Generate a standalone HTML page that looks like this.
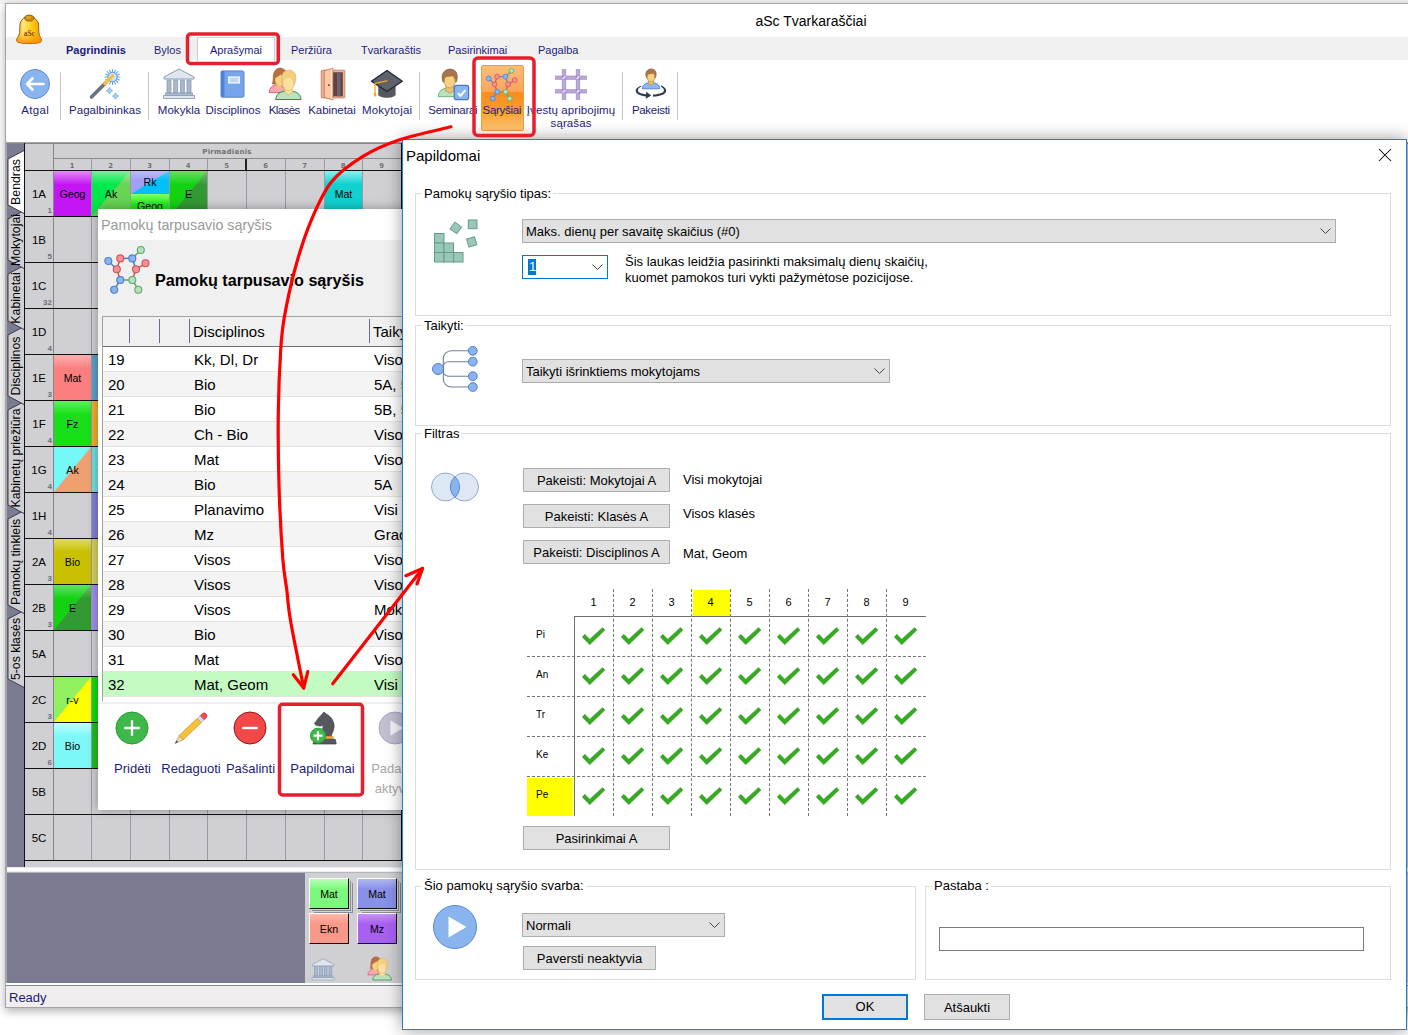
<!DOCTYPE html>
<html lang="lt"><head><meta charset="utf-8"><title>aSc Tvarkaraščiai</title>
<style>
*{box-sizing:border-box;margin:0;padding:0}
html,body{width:1408px;height:1035px;overflow:hidden;background:#fff}
body{position:relative;font-family:"Liberation Sans",sans-serif;font-size:13px;color:#000}
.a{position:absolute}
.c{position:absolute;text-align:center;white-space:nowrap}
.t{position:absolute;white-space:nowrap}
#win{position:absolute;left:5px;top:3px;width:1420px;height:1005px;background:#fff;border:1px solid #a4a4a4;box-shadow:0 3px 9px rgba(0,0,0,.32)}
.rl{position:absolute;text-align:center;white-space:nowrap;font-size:11.5px;color:#1c1c78;line-height:13px}
.tab{position:absolute;top:44px;white-space:nowrap;font-size:11px;color:#1c1c78;line-height:13px}
.sep{position:absolute;top:72px;width:1px;height:48px;background:#c6c6c6}
.cell{position:absolute;font-size:10.600px;text-align:center;white-space:nowrap;color:#000}
.rh{position:absolute;left:25px;width:28px;font-size:11.500px;text-align:center;line-height:46px;color:#000}
.rn{position:absolute;font-size:8px;font-weight:bold;color:#6e6e76;text-align:right;width:14px;line-height:8px}
  .vt{position:absolute;left:7px;width:18px;font-size:12.300px;color:#000;white-space:nowrap}
.vt span{position:absolute;left:50%;top:50%;transform:translate(-50%,-50%) rotate(-90deg);display:block}
.row{position:absolute;left:103px;width:300px;height:25px;font-size:15px;line-height:25px;border-bottom:1px solid #e4e4dc}
.row b{position:absolute;font-weight:normal;white-space:nowrap}
.gb{position:absolute;border:1px solid #dcdcdc}
.gl{position:absolute;background:#fff;white-space:nowrap;font-size:13px;line-height:15px;padding:0 2px}
.btn{position:absolute;background:#e1e1e1;border:1px solid #adadad;text-align:center;white-space:nowrap;font-size:13px}
.cb{position:absolute;background:#e1e1e1;border:1px solid #adadad;white-space:nowrap;font-size:13px;padding-left:3px}
.tl{position:absolute;text-align:center;white-space:nowrap;font-size:13px;color:#1c1c78;line-height:15px}
</style></head><body>

<div class="a" style="left:0;top:0;width:1408px;height:4px;background:#f2f2f2"></div>
<div id="win"></div>
<div class="c" style="left:711px;top:13px;width:200px;font-size:14px;line-height:16px">aSc Tvarkaraščiai</div>
<div class="a" style="left:6px;top:37px;width:1402px;height:23px;background:#f0f0f0"></div>
<div class="a" style="left:197px;top:37px;width:78px;height:24px;background:#fff;border:1px solid #d0d0d0;border-bottom:none"></div>
<div class="tab" style="left:66px;font-weight:bold;">Pagrindinis</div>
<div class="tab" style="left:154px;">Bylos</div>
<div class="tab" style="left:210px;">Aprašymai</div>
<div class="tab" style="left:291px;">Peržiūra</div>
<div class="tab" style="left:361px;">Tvarkaraštis</div>
<div class="tab" style="left:448px;">Pasirinkimai</div>
<div class="tab" style="left:538px;">Pagalba</div>
<svg class="a" style="left:15px;top:13px" width="30" height="32" viewBox="0 0 30 32">
<defs><linearGradient id="bg1" x1="0" y1="0" x2="1" y2="0"><stop offset="0" stop-color="#f7b500"/><stop offset=".28" stop-color="#fff08a"/><stop offset=".55" stop-color="#ffd81e"/><stop offset="1" stop-color="#f09a00"/></linearGradient>
<linearGradient id="bg2" x1="0" y1="0" x2="0" y2="1"><stop offset="0" stop-color="#ff9a00" stop-opacity="0"/><stop offset=".6" stop-color="#ff9a00" stop-opacity=".15"/><stop offset="1" stop-color="#ff8200" stop-opacity=".85"/></linearGradient></defs>
<path d="M14.30 3.60C12.88 3.60 11.28 3.58 10.00 4.20C8.72 4.82 7.40 6.30 6.60 7.30C5.80 8.30 5.48 9.08 5.20 10.20C4.92 11.32 5.05 12.18 4.90 14.00C4.75 15.82 4.68 19.35 4.30 21.10C3.92 22.85 3.05 23.52 2.60 24.50C2.15 25.48 1.53 26.22 1.60 27.00C1.67 27.78 1.93 28.67 3.00 29.20C4.07 29.73 6.12 29.98 8.00 30.20C9.88 30.42 12.20 30.50 14.30 30.50C16.40 30.50 18.75 30.42 20.60 30.20C22.45 29.98 24.42 29.73 25.40 29.20C26.38 28.67 26.48 27.78 26.50 27.00C26.52 26.22 25.90 25.48 25.50 24.50C25.10 23.52 24.42 22.85 24.10 21.10C23.78 19.35 23.72 15.82 23.60 14.00C23.48 12.18 23.73 11.32 23.40 10.20C23.07 9.08 22.42 8.30 21.60 7.30C20.78 6.30 19.72 4.82 18.50 4.20C17.28 3.58 15.72 3.60 14.30 3.60Z" fill="url(#bg1)" stroke="#96560a" stroke-width="1"/>
<path d="M14.30 3.60C12.88 3.60 11.28 3.58 10.00 4.20C8.72 4.82 7.40 6.30 6.60 7.30C5.80 8.30 5.48 9.08 5.20 10.20C4.92 11.32 5.05 12.18 4.90 14.00C4.75 15.82 4.68 19.35 4.30 21.10C3.92 22.85 3.05 23.52 2.60 24.50C2.15 25.48 1.53 26.22 1.60 27.00C1.67 27.78 1.93 28.67 3.00 29.20C4.07 29.73 6.12 29.98 8.00 30.20C9.88 30.42 12.20 30.50 14.30 30.50C16.40 30.50 18.75 30.42 20.60 30.20C22.45 29.98 24.42 29.73 25.40 29.20C26.38 28.67 26.48 27.78 26.50 27.00C26.52 26.22 25.90 25.48 25.50 24.50C25.10 23.52 24.42 22.85 24.10 21.10C23.78 19.35 23.72 15.82 23.60 14.00C23.48 12.18 23.73 11.32 23.40 10.20C23.07 9.08 22.42 8.30 21.60 7.30C20.78 6.30 19.72 4.82 18.50 4.20C17.28 3.58 15.72 3.60 14.30 3.60Z" fill="url(#bg2)"/>
<ellipse cx="14.200" cy="5.100" rx="4.500" ry="3" fill="#d0900c" stroke="#8a4a00" stroke-width=".8"/>
<ellipse cx="13.600" cy="4.300" rx="2.600" ry="1.200" fill="#e0a830"/>
<text x="14.300" y="23" font-family="Liberation Serif,serif" font-size="7.500" font-weight="bold" fill="#8a4a10" text-anchor="middle">aSc</text>
</svg>
<div class="sep" style="left:60px"></div>
<div class="sep" style="left:148px"></div>
<div class="sep" style="left:419px"></div>
<div class="sep" style="left:622px"></div>
<div class="sep" style="left:677px"></div>
<div class="a" style="left:481px;top:65px;width:43px;height:66px;border:1px solid #e8a040;border-radius:2px;background:linear-gradient(#fbbd7c 0,#f9a55a 40%,#f98d1e 41%,#fb9a2c 68%,#fdc670 100%)"></div>
<div class="rl" style="left:-24.82px;top:104px;width:120px;letter-spacing:0.36px">Atgal</div>
<div class="rl" style="left:45.02px;top:104px;width:120px;letter-spacing:0.03px">Pagalbininkas</div>
<div class="rl" style="left:119.02px;top:104px;width:120px;letter-spacing:0.04px">Mokykla</div>
<div class="rl" style="left:173.00px;top:104px;width:120px;letter-spacing:0.00px">Disciplinos</div>
<div class="rl" style="left:224.21px;top:104px;width:120px;letter-spacing:-0.58px">Klasės</div>
<div class="rl" style="left:271.97px;top:104px;width:120px;letter-spacing:-0.06px">Kabinetai</div>
<div class="rl" style="left:327.11px;top:104px;width:120px;letter-spacing:0.21px">Mokytojai</div>
<div class="rl" style="left:392.84px;top:104px;width:120px;letter-spacing:-0.31px">Seminarai</div>
<div class="rl" style="left:441.85px;top:104px;width:120px;letter-spacing:-0.30px">Sąryšiai</div>
<div class="rl" style="left:511.05px;top:104px;width:120px;letter-spacing:0.09px">Įvestų apribojimų<br>sąrašas</div>
<div class="rl" style="left:590.86px;top:104px;width:120px;letter-spacing:-0.29px">Pakeisti</div>
<svg class="a" style="left:19px;top:68px" width="32" height="32" viewBox="0 0 32 32"><circle cx="16" cy="16" r="14.500" fill="#8ab4ee" stroke="#5b8ad6" stroke-width="1"/><path d="M24.500 16H8.500M13.500 10.500L8 16l5.500 5.500" fill="none" stroke="#fff" stroke-width="2.600" stroke-linecap="round" stroke-linejoin="round"/></svg>
<svg class="a" style="left:88px;top:68px" width="34" height="34" viewBox="0 0 34 34">
<g stroke="#5fa0e8" stroke-width="1.100" stroke-linecap="round"><path d="M24.500 1.500v3.500M24.500 13v3.500M17 9h3.500M28.500 9h3.500M19.200 3.700l2.500 2.500M27.300 11.800l2.500 2.500M29.800 3.700l-2.500 2.500M21.700 11.800l-2.500 2.500M21.600 2.100l1.300 3.100M26.100 12.800l1.300 3.100M27.400 2.100l-1.300 3.100M22.900 12.800l-1.300 3.100M17.600 6.100l3.100 1.300M28.300 10.600l3.100 1.300M17.600 11.900l3.100-1.300M28.300 7.400l3.100-1.300"/></g>
<circle cx="24.500" cy="9" r="4.600" fill="#cfe4fb" stroke="#5fa0e8" stroke-width="1"/>
<path d="M3.500 29L17.500 15" stroke="#6a7480" stroke-width="3.600" stroke-linecap="round"/>
<path d="M17 15.500L24.500 8" stroke="#f0c24a" stroke-width="3.600" stroke-linecap="round"/>
<path d="M17 15.500L18.500 14" stroke="#f0c24a" stroke-width="3.600" stroke-linecap="butt"/>
<path d="M21.500 19.500l1.100 2.100 2.100 1.100-2.100 1.100-1.100 2.100-1.100-2.100-2.100-1.100 2.100-1.100zM27.500 25l1.100 2 2 1.100-2 1.100-1.100 2-1.100-2-2-1.100 2-1.100z" fill="#a9cdf5" stroke="#5fa0e8" stroke-width=".7"/>
</svg>
<svg class="a" style="left:162px;top:68px" width="34.0" height="32.0" viewBox="0 0 34 32">
<path d="M17 1L2 9v2h30V9z" fill="#dfe6ee" stroke="#8a9bb4" stroke-width="1"/>
<g fill="#a9b8cf" stroke="#8a9bb4" stroke-width=".8"><rect x="5" y="12" width="4" height="13"/><rect x="11.700" y="12" width="4" height="13"/><rect x="18.300" y="12" width="4" height="13"/><rect x="25" y="12" width="4" height="13"/></g>
<rect x="3.500" y="25" width="27" height="2.500" fill="#a9b8cf" stroke="#8a9bb4" stroke-width=".8"/>
<rect x="1.500" y="27.500" width="31" height="3" fill="#dfe6ee" stroke="#8a9bb4" stroke-width=".8"/>
</svg>
<svg class="a" style="left:219px;top:69.500px" width="28" height="29" viewBox="0 0 28 32" preserveAspectRatio="none">
<rect x="2" y="1" width="23" height="29" rx="1.500" fill="#76a5ea" stroke="#4f83d3" stroke-width="1"/>
<rect x="2" y="1" width="3.500" height="29" fill="#4f83d3"/>
<rect x="9" y="7" width="12" height="8" fill="#e9f0fb"/>
<path d="M11 9.800h8M11 12.200h8" stroke="#9ab5de" stroke-width="1"/>
</svg>
<svg class="a" style="left:268px;top:67px" width="34.0" height="34.0" viewBox="0 0 34 34">
<path d="M1.200 25.600c.2-5 3.400-7.600 8.200-7.600s8 2.600 8.200 7.600z" fill="#f6a8b0" stroke="#e0506a" stroke-width=".9"/>
<path d="M4.300 17C6 13 4.500 9 6 5.500C7.300 2.300 10 1 12 1.100C14.500 1.100 16.500 2.500 17.600 4L17 17.200z" fill="#b87040" stroke="#9a5a30" stroke-width=".6" stroke-linejoin="round"/>
<path d="M8.600 17.500h4.600v3.200c-1.500 1.200-3.100 1.200-4.600 0z" fill="#f0c070"/>
<ellipse cx="11.300" cy="13" rx="4.200" ry="5.800" fill="#f6d283"/>
<path d="M7 11c1.500-.5 4.500-2 6.500-4.500L15 4 9 3.500 6.500 7z" fill="#b87040"/>
<path d="M7.800 32.500C8 27 12 24 20.300 24S32.800 27 33 32.500z" fill="#b9e3bf" stroke="#2f8f40" stroke-width="1"/>
<path d="M16.800 20.500h7.600v5l-3.800 2.200-3.800-2.200z" fill="#fde0a0" stroke="#d8b060" stroke-width=".6"/>
<path d="M14.600 17.500C12.600 12 13.600 5.500 18 3.800C20.500 2.600 24 3 25.800 5.200C28 6.500 28.600 12 26.400 17.500z" fill="#f2cf80" stroke="#d8b060" stroke-width=".7" stroke-linejoin="round"/>
<ellipse cx="20.400" cy="16.300" rx="5.600" ry="7.300" fill="#fde0a0" stroke="#e0b868" stroke-width=".7"/>
<path d="M14.700 14.500C14.900 13 15.300 12.300 15.900 11.600C18.500 12 22 11 24.300 9C25.300 10.500 25.900 12.500 26.100 14.500C28 10 26.500 6.500 24.800 5.600C23 3.600 20 3.400 18.200 4.600C15 5.800 13.500 10 14.700 14.500Z" fill="#f2cf80"/>
</svg>
<svg class="a" style="left:319px;top:67px" width="28" height="34" viewBox="0 0 28 34">
<rect x="2.200" y="3.200" width="23.600" height="27.700" rx=".8" fill="#f0b090" stroke="#c07a58" stroke-width=".8"/>
<rect x="13.500" y="5.300" width="10.300" height="24" fill="#5a4448"/>
<rect x="18" y="5.300" width="3.500" height="24" fill="#74606a"/>
<path d="M5.200 3.800L13.900 1V33L5.200 30.300z" fill="#ffc8a4" stroke="#b87048" stroke-width=".8" stroke-linejoin="round"/>
<path d="M12.600 1.600V32.400" stroke="#ffe2cc" stroke-width="1.200"/>
<rect x="9" y="17.300" width="1.700" height="1.700" fill="#7a4a30"/>
</svg>
<svg class="a" style="left:370px;top:69px" width="34" height="32" viewBox="0 0 34 32">
<path d="M8.200 16.400v9.100c0 1.800 4 3.200 8.700 3.200s8.700-1.400 8.700-3.200v-9.100z" fill="#55585e"/>
<path d="M17 1.500L32.300 12.200 17 22.500 1.400 12.200z" fill="#5f6268" stroke="#1a2838" stroke-width="1.300" stroke-linejoin="round"/>
<path d="M17 11.800L5 14.300V24" fill="none" stroke="#f5a820" stroke-width="1.300" stroke-linecap="round" stroke-linejoin="round"/>
<path d="M5 22.500l1.500 3-1.500 2.700-1.500-2.700z" fill="#f5a820"/>
</svg>
<svg class="a" style="left:437px;top:68px" width="34" height="34" viewBox="0 0 34 34">
<path d="M1.300 28.700c0-6 4.500-8.700 11-8.700s11 2.700 11 8.700z" fill="#b9e3bf" stroke="#5fae72" stroke-width=".9"/><path d="M8.80 18.10h7.80v5.00l-3.90 2.00l-3.90 -2.00z" fill="#f0c070" stroke="#b88a40" stroke-width=".7"/><path d="M6.10 14.10C4.30 9.10 5.10 4.70 8.10 2.90C10.10 0.90 14.30 0.50 16.60 2.10C19.90 3.10 21.30 8.10 19.30 14.10Z" fill="#a8744c" stroke="#8a5530" stroke-width=".7" stroke-linejoin="round"/><ellipse cx="12.7" cy="13.40" rx="5.40" ry="6.50" fill="#f6d283" stroke="#c39a4a" stroke-width=".8"/><path d="M6.80 10.70C7.10 9.70 7.50 9.30 8.10 8.90C10.70 9.30 15.10 8.50 17.70 7.30C18.20 8.30 18.50 9.50 18.60 10.70C20.30 7.10 18.70 3.50 16.30 2.70C14.30 1.30 10.10 1.50 8.50 3.30C5.90 4.90 5.50 8.10 6.80 10.70Z" fill="#a8744c"/>
<rect x="17.300" y="17.300" width="14.300" height="14.300" rx="2.200" fill="#8ab4ee" stroke="#4a78c0" stroke-width="1.200"/>
<path d="M20.800 25.200l2.700 2.600 4.900-5.700" fill="none" stroke="#fff" stroke-width="2" stroke-linecap="butt" stroke-linejoin="miter"/>
</svg>
<svg class="a" style="left:485px;top:67.5px;opacity:1" width="33.6" height="35.0" viewBox="0 0 48 50"><g stroke-width="1.500" fill="none"><path d="M5.3 15L13.8 23.3" stroke="#4a7fd0"/><path d="M17.3 12.4L13.8 23.3" stroke="#d05058"/><path d="M17.3 12.4L29.3 12.4" stroke="#4a7fd0"/><path d="M29.3 12.4L37.8 4" stroke="#5fa86a"/><path d="M29.3 12.4L33 23.3" stroke="#4a7fd0"/><path d="M33 23.3L42.5 17.3" stroke="#d05058"/><path d="M13.8 23.3L17.3 34" stroke="#d05058"/><path d="M33 23.3L29.3 34" stroke="#d05058"/><path d="M17.3 34L29.3 34" stroke="#5fa86a"/><path d="M17.3 34L11.2 43.7" stroke="#4a7fd0"/><path d="M29.3 34L35.3 43.7" stroke="#5fa86a"/></g><g stroke-width="1.100"><circle cx="5.3" cy="15" r="3.500" fill="#8ab4ee" stroke="#4a7fd0"/><circle cx="17.3" cy="12.4" r="3.500" fill="#f79094" stroke="#d05058"/><circle cx="29.3" cy="12.4" r="3.500" fill="#8ab4ee" stroke="#4a7fd0"/><circle cx="37.8" cy="4" r="3.500" fill="#b6e0bb" stroke="#5fa86a"/><circle cx="13.8" cy="23.3" r="3.500" fill="#f79094" stroke="#d05058"/><circle cx="33" cy="23.3" r="3.500" fill="#f79094" stroke="#d05058"/><circle cx="42.5" cy="17.3" r="3.500" fill="#f79094" stroke="#d05058"/><circle cx="17.3" cy="34" r="3.500" fill="#8ab4ee" stroke="#4a7fd0"/><circle cx="29.3" cy="34" r="3.500" fill="#b6e0bb" stroke="#5fa86a"/><circle cx="11.2" cy="43.7" r="3.500" fill="#8ab4ee" stroke="#4a7fd0"/><circle cx="35.3" cy="43.7" r="3.500" fill="#b6e0bb" stroke="#5fa86a"/></g></svg>
<svg class="a" style="left:555px;top:68.500px" width="32" height="31" viewBox="0 0 32 32" preserveAspectRatio="none">
<g stroke="#bca8da" stroke-width="3.400" stroke-linecap="butt"><path d="M9 0v32M23 0v32M0 9h32M0 23h32"/></g>
<g stroke="#9a82c0" stroke-width=".7" fill="none"><path d="M7.300 0v32M10.700 0v32M21.300 0v32M24.700 0v32M0 7.300h32M0 10.700h32M0 21.300h32M0 24.700h32"/></g>
<g stroke="#efe8f8" stroke-width="1.300"><path d="M7.500 10.500l3-3M21.500 10.500l3-3M7.500 24.500l3-3M21.500 24.500l3-3"/></g>
</svg>
<svg class="a" style="left:633px;top:67px" width="36" height="36" viewBox="0 0 36 36">
<path d="M9.400 21.800c0-4.300 3.400-6.100 8.600-6.100s8.700 1.800 8.700 6.100z" fill="#8ab8f4" stroke="#4a7fd0" stroke-width=".9"/><path d="M15.35 13.46h5.30v3.40l-2.65 1.36l-2.65 -1.36z" fill="#f0c070" stroke="#b88a40" stroke-width=".7"/><path d="M13.51 10.74C12.29 7.34 12.83 4.35 14.87 3.12C16.23 1.76 19.09 1.49 20.65 2.58C22.90 3.26 23.85 6.66 22.49 10.74Z" fill="#a8744c" stroke="#8a5530" stroke-width=".7" stroke-linejoin="round"/><ellipse cx="18" cy="10.26" rx="3.67" ry="4.42" fill="#f6d283" stroke="#c39a4a" stroke-width=".8"/><path d="M13.99 8.43C14.19 7.75 14.46 7.48 14.87 7.20C16.64 7.48 19.63 6.93 21.40 6.12C21.74 6.80 21.94 7.61 22.01 8.43C23.17 5.98 22.08 3.53 20.45 2.99C19.09 2.04 16.23 2.17 15.14 3.40C13.38 4.48 13.10 6.66 13.99 8.43Z" fill="#a8744c"/>
<g fill="#2c3a4a"><path d="M7.800 18.700C3.400 20.600 2.100 23 3 24.900C4.400 27.700 8.300 28.800 13.500 29.400L13.500 27.300C9 26.700 5.700 25.700 5 23.900C4.500 22.400 5.700 20.900 8.300 19.600Z"/>
<path d="M28.300 18.500C32.600 20.500 33.800 23 32.900 25.100C31.400 28.100 26 29.400 20 29.800L20 27.500C25 27.100 30 26.100 30.900 23.900C31.400 22.400 30.400 20.900 27.800 19.400Z"/>
<path d="M13.200 24.800L18.200 28.500 12.800 31.800Z"/></g>
</svg>
<div class="a" style="left:7px;top:143px;width:1401px;height:725px;background:#d0cfd4"></div>
<div class="a" style="left:6px;top:143px;width:2px;height:841px;background:#a8a8a8"></div>
<div class="a" style="left:7px;top:143px;width:18px;height:725px;background:#7b7b91"></div>
<svg class="a" style="left:7px;top:143px" width="18" height="722" viewBox="0 143 18 722"><path d="M18 610L1 619V679L18 688z" fill="#d0cfd4" stroke="#3c3c4c" stroke-width="1"/><path d="M18 510L1 519V605L18 614z" fill="#d0cfd4" stroke="#3c3c4c" stroke-width="1"/><path d="M18 401L1 410V505L18 514z" fill="#d0cfd4" stroke="#3c3c4c" stroke-width="1"/><path d="M18 326L1 335V396L18 405z" fill="#d0cfd4" stroke="#3c3c4c" stroke-width="1"/><path d="M18 265L1 274V321L18 330z" fill="#d0cfd4" stroke="#3c3c4c" stroke-width="1"/><path d="M18 210L1 219V260L18 269z" fill="#d0cfd4" stroke="#3c3c4c" stroke-width="1"/><path d="M18 150L1 159V205L18 214z" fill="#fff" stroke="#3c3c4c" stroke-width="1"/></svg>
<div class="vt" style="top:152px;height:60px"><span>Bendras</span></div>
<div class="vt" style="top:212px;height:55px"><span>Mokytojai</span></div>
<div class="vt" style="top:267px;height:61px"><span>Kabinetai</span></div>
<div class="vt" style="top:328px;height:75px"><span>Disciplinos</span></div>
<div class="vt" style="top:403px;height:109px"><span>Kabinetų priežiūra</span></div>
<div class="vt" style="top:512px;height:100px"><span>Pamokų tinkleis</span></div>
<div class="vt" style="top:612px;height:74px"><span>5-os klasės</span></div>
<div class="a" style="left:25px;top:143px;width:378px;height:28px;background:#d0cfd4"></div>
<div class="a" style="left:53px;top:158px;width:350px;height:1px;background:#8a8a8a"></div>
<div class="a" style="left:6px;top:142px;width:1402px;height:2px;background:linear-gradient(#b4b4b4,#7a7a7a)"></div>
<div class="c" style="left:53px;top:148px;width:348px;font-size:7px;font-weight:bold;color:#707070;letter-spacing:.250px;line-height:9px;font-family:'DejaVu Sans',sans-serif">Pirmadienis</div>
<div class="c" style="left:53px;top:162px;width:38px;font-size:6.800px;font-weight:bold;color:#707070;line-height:9px;font-family:'DejaVu Sans',sans-serif">1</div>
<div class="c" style="left:91px;top:162px;width:39px;font-size:6.800px;font-weight:bold;color:#707070;line-height:9px;font-family:'DejaVu Sans',sans-serif">2</div>
<div class="c" style="left:130px;top:162px;width:39px;font-size:6.800px;font-weight:bold;color:#707070;line-height:9px;font-family:'DejaVu Sans',sans-serif">3</div>
<div class="c" style="left:169px;top:162px;width:38px;font-size:6.800px;font-weight:bold;color:#707070;line-height:9px;font-family:'DejaVu Sans',sans-serif">4</div>
<div class="c" style="left:207px;top:162px;width:39px;font-size:6.800px;font-weight:bold;color:#707070;line-height:9px;font-family:'DejaVu Sans',sans-serif">5</div>
<div class="c" style="left:246px;top:162px;width:39px;font-size:6.800px;font-weight:bold;color:#707070;line-height:9px;font-family:'DejaVu Sans',sans-serif">6</div>
<div class="c" style="left:285px;top:162px;width:39px;font-size:6.800px;font-weight:bold;color:#707070;line-height:9px;font-family:'DejaVu Sans',sans-serif">7</div>
<div class="c" style="left:324px;top:162px;width:38px;font-size:6.800px;font-weight:bold;color:#707070;line-height:9px;font-family:'DejaVu Sans',sans-serif">8</div>
<div class="c" style="left:362px;top:162px;width:39px;font-size:6.800px;font-weight:bold;color:#707070;line-height:9px;font-family:'DejaVu Sans',sans-serif">9</div>
<div class="a" style="left:53px;top:143px;width:1px;height:718px;background:#85858c"></div>
<div class="a" style="left:91px;top:159px;width:1px;height:702px;background:#9a9aa2"></div>
<div class="a" style="left:130px;top:159px;width:1px;height:702px;background:#9a9aa2"></div>
<div class="a" style="left:169px;top:159px;width:1px;height:702px;background:#9a9aa2"></div>
<div class="a" style="left:207px;top:159px;width:1px;height:702px;background:#9a9aa2"></div>
<div class="a" style="left:246px;top:159px;width:1px;height:702px;background:#9a9aa2"></div>
<div class="a" style="left:285px;top:159px;width:1px;height:702px;background:#9a9aa2"></div>
<div class="a" style="left:324px;top:159px;width:1px;height:702px;background:#9a9aa2"></div>
<div class="a" style="left:362px;top:159px;width:1px;height:702px;background:#9a9aa2"></div>
<div class="a" style="left:401px;top:159px;width:1px;height:702px;background:#9a9aa2"></div>
<div class="a" style="left:24px;top:143px;width:1px;height:724px;background:#111"></div>
<div class="a" style="left:245px;top:159px;width:2px;height:12px;background:#222"></div>
<div class="cell" style="left:54px;top:171px;width:37px;height:45px;line-height:47px;background:linear-gradient(#e58af8 0,#c416f4 30%,#c416f4 100%)">Geog</div>
<div class="cell" style="left:92px;top:171px;width:38px;height:45px;line-height:47px;background:linear-gradient(rgba(255,255,255,.45),rgba(255,255,255,0) 30%),linear-gradient(to bottom right,#00e84a 0,#00e84a 49.500%,#66d455 50.500%,#66d455 100%)">Ak</div>
<div class="cell" style="left:131px;top:171px;width:38px;height:23px;line-height:23px;background:linear-gradient(rgba(255,255,255,.3),rgba(255,255,255,0) 40%),linear-gradient(to bottom right,#9f9ff5 0,#9f9ff5 49%,#00c0f8 51%)">Rk</div>
<div class="cell" style="left:131px;top:194px;width:38px;height:22px;line-height:24px;overflow:hidden;background:linear-gradient(#8cff6a,#1cf01c 45%)">Geog</div>
<div class="cell" style="left:170px;top:171px;width:37px;height:45px;line-height:47px;background:linear-gradient(rgba(255,255,255,.35),rgba(255,255,255,0) 30%),linear-gradient(to bottom right,#12d212 0,#12d212 49.500%,#339a33 50.500%,#339a33 100%)">E</div>
<div class="cell" style="left:325px;top:171px;width:37px;height:45px;line-height:47px;background:linear-gradient(#8ef0f0 0,#10d0d0 30%,#10d0d0 100%)">Mat</div>
<div class="cell" style="left:54px;top:355px;width:37px;height:45px;line-height:47px;background:linear-gradient(#ffb0b0 0,#fb7f7f 30%,#fb7f7f 100%)">Mat</div>
<div class="cell" style="left:54px;top:401px;width:37px;height:45px;line-height:47px;background:linear-gradient(#60f060 0,#18e018 30%,#18e018 100%)">Fz</div>
<div class="cell" style="left:54px;top:447px;width:37px;height:45px;line-height:47px;background:linear-gradient(to bottom right,#74f8f8 0,#74f8f8 49.500%,#f0a070 50.500%,#f0a070 100%)">Ak</div>
<div class="cell" style="left:54px;top:539px;width:37px;height:45px;line-height:47px;background:linear-gradient(#e0dc60 0,#c8c000 30%,#c8c000 100%)">Bio</div>
<div class="cell" style="left:54px;top:585px;width:37px;height:45px;line-height:47px;background:linear-gradient(rgba(255,255,255,.35),rgba(255,255,255,0) 30%),linear-gradient(to bottom right,#12d212 0,#12d212 49.500%,#339a33 50.500%,#339a33 100%)">E</div>
<div class="cell" style="left:54px;top:677px;width:37px;height:45px;line-height:47px;background:linear-gradient(to bottom right,#90f060 0,#90f060 49.500%,#ffff00 50.500%,#ffff00 100%)">r-v</div>
<div class="cell" style="left:54px;top:723px;width:37px;height:45px;line-height:47px;background:linear-gradient(#c0ffff 0,#7cf8f8 30%,#7cf8f8 100%)">Bio</div>
<div class="cell" style="left:92px;top:355px;width:8px;height:45px;line-height:47px;background:#5aa0d0"></div>
<div class="cell" style="left:92px;top:401px;width:8px;height:45px;line-height:47px;background:#f0b030"></div>
<div class="cell" style="left:92px;top:447px;width:8px;height:45px;line-height:47px;background:#70e0e0"></div>
<div class="cell" style="left:92px;top:493px;width:8px;height:45px;line-height:47px;background:#8080d8"></div>
<div class="cell" style="left:92px;top:539px;width:8px;height:45px;line-height:47px;background:#d8d060"></div>
<div class="cell" style="left:92px;top:585px;width:8px;height:45px;line-height:47px;background:#a090f0"></div>
<div class="cell" style="left:92px;top:677px;width:8px;height:45px;line-height:47px;background:#10e010"></div>
<div class="cell" style="left:92px;top:723px;width:8px;height:45px;line-height:47px;background:#20c020"></div>
<div class="rh" style="top:171px;height:46px">1A</div>
<div class="rn" style="left:38px;top:207px">1</div>
<div class="rh" style="top:217px;height:46px">1B</div>
<div class="rn" style="left:38px;top:253px">5</div>
<div class="rh" style="top:263px;height:46px">1C</div>
<div class="rn" style="left:38px;top:299px">32</div>
<div class="rh" style="top:309px;height:46px">1D</div>
<div class="rn" style="left:38px;top:345px">4</div>
<div class="rh" style="top:355px;height:46px">1E</div>
<div class="rn" style="left:38px;top:391px">3</div>
<div class="rh" style="top:401px;height:46px">1F</div>
<div class="rn" style="left:38px;top:437px">4</div>
<div class="rh" style="top:447px;height:46px">1G</div>
<div class="rn" style="left:38px;top:483px">4</div>
<div class="rh" style="top:493px;height:46px">1H</div>
<div class="rn" style="left:38px;top:529px">4</div>
<div class="rh" style="top:539px;height:46px">2A</div>
<div class="rn" style="left:38px;top:575px">3</div>
<div class="rh" style="top:585px;height:46px">2B</div>
<div class="rn" style="left:38px;top:621px">3</div>
<div class="rh" style="top:631px;height:46px">5A</div>
<div class="rh" style="top:677px;height:46px">2C</div>
<div class="rn" style="left:38px;top:713px">3</div>
<div class="rh" style="top:723px;height:46px">2D</div>
<div class="rn" style="left:38px;top:759px">6</div>
<div class="rh" style="top:769px;height:46px">5B</div>
<div class="rh" style="top:815px;height:46px">5C</div>
<div class="a" style="left:25px;top:170px;width:378px;height:1px;background:#111"></div>
<div class="a" style="left:25px;top:216px;width:378px;height:1px;background:#111"></div>
<div class="a" style="left:25px;top:262px;width:378px;height:1px;background:#111"></div>
<div class="a" style="left:25px;top:308px;width:378px;height:1px;background:#111"></div>
<div class="a" style="left:25px;top:354px;width:378px;height:1px;background:#111"></div>
<div class="a" style="left:25px;top:400px;width:378px;height:1px;background:#111"></div>
<div class="a" style="left:25px;top:446px;width:378px;height:1px;background:#111"></div>
<div class="a" style="left:25px;top:492px;width:378px;height:1px;background:#111"></div>
<div class="a" style="left:25px;top:538px;width:378px;height:1px;background:#111"></div>
<div class="a" style="left:25px;top:584px;width:378px;height:1px;background:#111"></div>
<div class="a" style="left:25px;top:630px;width:378px;height:1px;background:#111"></div>
<div class="a" style="left:25px;top:676px;width:378px;height:1px;background:#111"></div>
<div class="a" style="left:25px;top:722px;width:378px;height:1px;background:#111"></div>
<div class="a" style="left:25px;top:768px;width:378px;height:1px;background:#111"></div>
<div class="a" style="left:25px;top:814px;width:378px;height:1px;background:#111"></div>
<div class="a" style="left:25px;top:860px;width:378px;height:1px;background:#111"></div>
<div class="a" style="left:7px;top:867px;width:1401px;height:6px;background:linear-gradient(#e4e4e6,#fff 30%,#fff 70%,#9a9aa0)"></div>
<div class="a" style="left:401px;top:143px;width:1px;height:718px;background:#111"></div>
<div class="a" style="left:7px;top:873px;width:298px;height:110px;background:#7b7b91"></div>
<div class="a" style="left:305px;top:873px;width:1103px;height:110px;background:#d0cfd4"></div>
<div class="a" style="left:314px;top:883px;width:39px;height:30px;background:#d4d4d8;border:1px solid #8a8a90;border-left:none;border-top:none"></div><div class="a" style="left:312px;top:881px;width:39px;height:30px;background:#d4d4d8;border:1px solid #8a8a90;border-left:none;border-top:none"></div><div class="cell" style="left:309px;top:878px;width:40px;height:30.500px;line-height:30px;background:linear-gradient(#b8ffb8,#7cf87c 35%);border-left:1px solid #fff;border-top:1px solid #fff;border-right:1px solid #111;border-bottom:1px solid #111">Mat</div>
<div class="a" style="left:362px;top:883px;width:39px;height:30px;background:#d4d4d8;border:1px solid #8a8a90;border-left:none;border-top:none"></div><div class="a" style="left:360px;top:881px;width:39px;height:30px;background:#d4d4d8;border:1px solid #8a8a90;border-left:none;border-top:none"></div><div class="cell" style="left:357px;top:878px;width:40px;height:30.500px;line-height:30px;background:linear-gradient(#b0b8f0,#8890e8 35%);border-left:1px solid #fff;border-top:1px solid #fff;border-right:1px solid #111;border-bottom:1px solid #111">Mat</div>
<div class="cell" style="left:309px;top:913.2px;width:40px;height:30.500px;line-height:30px;background:linear-gradient(#ffb8a8,#f89888 35%);border-left:1px solid #fff;border-top:1px solid #fff;border-right:1px solid #111;border-bottom:1px solid #111">Ekn</div>
<div class="cell" style="left:357px;top:913.2px;width:40px;height:30.500px;line-height:30px;background:linear-gradient(#c890f8,#a860f0 35%);border-left:1px solid #fff;border-top:1px solid #fff;border-right:1px solid #111;border-bottom:1px solid #111">Mz</div>
<svg class="a" style="left:311px;top:958px" width="24.48" height="23.04" viewBox="0 0 34 32">
<path d="M17 1L2 9v2h30V9z" fill="#dfe6ee" stroke="#8a9bb4" stroke-width="1"/>
<g fill="#a9b8cf" stroke="#8a9bb4" stroke-width=".8"><rect x="5" y="12" width="4" height="13"/><rect x="11.700" y="12" width="4" height="13"/><rect x="18.300" y="12" width="4" height="13"/><rect x="25" y="12" width="4" height="13"/></g>
<rect x="3.500" y="25" width="27" height="2.500" fill="#a9b8cf" stroke="#8a9bb4" stroke-width=".8"/>
<rect x="1.500" y="27.500" width="31" height="3" fill="#dfe6ee" stroke="#8a9bb4" stroke-width=".8"/>
</svg>
<svg class="a" style="left:367px;top:956px" width="25.16" height="25.16" viewBox="0 0 34 34">
<path d="M1.200 25.600c.2-5 3.400-7.600 8.200-7.600s8 2.600 8.200 7.600z" fill="#f6a8b0" stroke="#e0506a" stroke-width=".9"/>
<path d="M4.300 17C6 13 4.500 9 6 5.500C7.300 2.300 10 1 12 1.100C14.500 1.100 16.500 2.500 17.600 4L17 17.200z" fill="#b87040" stroke="#9a5a30" stroke-width=".6" stroke-linejoin="round"/>
<path d="M8.600 17.500h4.600v3.200c-1.500 1.200-3.100 1.200-4.600 0z" fill="#f0c070"/>
<ellipse cx="11.300" cy="13" rx="4.200" ry="5.800" fill="#f6d283"/>
<path d="M7 11c1.500-.5 4.500-2 6.500-4.500L15 4 9 3.500 6.500 7z" fill="#b87040"/>
<path d="M7.800 32.500C8 27 12 24 20.300 24S32.800 27 33 32.500z" fill="#b9e3bf" stroke="#2f8f40" stroke-width="1"/>
<path d="M16.800 20.500h7.600v5l-3.800 2.200-3.800-2.200z" fill="#fde0a0" stroke="#d8b060" stroke-width=".6"/>
<path d="M14.600 17.500C12.600 12 13.600 5.500 18 3.800C20.500 2.600 24 3 25.800 5.200C28 6.500 28.600 12 26.400 17.500z" fill="#f2cf80" stroke="#d8b060" stroke-width=".7" stroke-linejoin="round"/>
<ellipse cx="20.400" cy="16.300" rx="5.600" ry="7.300" fill="#fde0a0" stroke="#e0b868" stroke-width=".7"/>
<path d="M14.700 14.500C14.900 13 15.300 12.300 15.900 11.600C18.500 12 22 11 24.300 9C25.300 10.500 25.900 12.500 26.100 14.500C28 10 26.500 6.500 24.800 5.600C23 3.600 20 3.400 18.200 4.600C15 5.800 13.500 10 14.700 14.500Z" fill="#f2cf80"/>
</svg>
<div class="a" style="left:6px;top:983px;width:1402px;height:2px;background:#fff"></div>
<div class="a" style="left:6px;top:985px;width:1402px;height:22px;background:#f0eeee;border-top:1px solid #7e88a0"></div>
<div class="t" style="left:9px;top:990px;font-size:13px;color:#1c1c78;line-height:15px">Ready</div>
<div class="a" style="left:98px;top:209px;width:320px;height:601px;background:#f0f0f0;box-shadow:0 0 10px rgba(0,0,0,.35)"></div>
<div class="a" style="left:98px;top:209px;width:320px;height:31px;background:#fff"></div>
<div class="t" style="left:101px;top:217px;font-size:14.300px;line-height:17px;color:#9a9a9a">Pamokų tarpusavio sąryšis</div>
<svg class="a" style="left:103px;top:246px;opacity:1" width="48.0" height="50.0" viewBox="0 0 48 50"><g stroke-width="1.500" fill="none"><path d="M5.3 15L13.8 23.3" stroke="#4a7fd0"/><path d="M17.3 12.4L13.8 23.3" stroke="#d05058"/><path d="M17.3 12.4L29.3 12.4" stroke="#4a7fd0"/><path d="M29.3 12.4L37.8 4" stroke="#5fa86a"/><path d="M29.3 12.4L33 23.3" stroke="#4a7fd0"/><path d="M33 23.3L42.5 17.3" stroke="#d05058"/><path d="M13.8 23.3L17.3 34" stroke="#d05058"/><path d="M33 23.3L29.3 34" stroke="#d05058"/><path d="M17.3 34L29.3 34" stroke="#5fa86a"/><path d="M17.3 34L11.2 43.7" stroke="#4a7fd0"/><path d="M29.3 34L35.3 43.7" stroke="#5fa86a"/></g><g stroke-width="1.100"><circle cx="5.3" cy="15" r="3.500" fill="#8ab4ee" stroke="#4a7fd0"/><circle cx="17.3" cy="12.4" r="3.500" fill="#f79094" stroke="#d05058"/><circle cx="29.3" cy="12.4" r="3.500" fill="#8ab4ee" stroke="#4a7fd0"/><circle cx="37.8" cy="4" r="3.500" fill="#b6e0bb" stroke="#5fa86a"/><circle cx="13.8" cy="23.3" r="3.500" fill="#f79094" stroke="#d05058"/><circle cx="33" cy="23.3" r="3.500" fill="#f79094" stroke="#d05058"/><circle cx="42.5" cy="17.3" r="3.500" fill="#f79094" stroke="#d05058"/><circle cx="17.3" cy="34" r="3.500" fill="#8ab4ee" stroke="#4a7fd0"/><circle cx="29.3" cy="34" r="3.500" fill="#b6e0bb" stroke="#5fa86a"/><circle cx="11.2" cy="43.7" r="3.500" fill="#8ab4ee" stroke="#4a7fd0"/><circle cx="35.3" cy="43.7" r="3.500" fill="#b6e0bb" stroke="#5fa86a"/></g></svg>
<div class="t" style="left:155px;top:270px;font-size:16.150px;font-weight:bold;line-height:20px;color:#000">Pamokų tarpusavio sąryšis</div>
<div class="a" style="left:98px;top:346px;width:320px;height:464px;background:#fff"></div>
<div class="a" style="left:102px;top:316px;width:310px;height:385px;border:1px solid #a0a0a0;border-bottom:none"></div>
<div class="a" style="left:98px;top:702px;width:320px;height:2px;background:#f0f0f0"></div>
<div class="a" style="left:103px;top:317px;width:308px;height:30px;background:#f0f0f0;border-bottom:1px solid #707070"></div>
<div class="a" style="left:129px;top:319px;width:1px;height:24px;background:#6a6a9a"></div>
<div class="a" style="left:159px;top:319px;width:1px;height:24px;background:#6a6a9a"></div>
<div class="a" style="left:189px;top:319px;width:1px;height:24px;background:#6a6a9a"></div>
<div class="a" style="left:369px;top:319px;width:1px;height:24px;background:#6a6a9a"></div>
<div class="t" style="left:193px;top:322px;font-size:15px;line-height:19px">Disciplinos</div>
<div class="t" style="left:373px;top:322px;font-size:15px;line-height:19px">Taikyti</div>
<div class="row" style="top:347px;background:#fff"><b style="left:5px">19</b><b style="left:91px">Kk, Dl, Dr</b><b style="left:271px">Visos</b></div>
<div class="row" style="top:372px;background:#f4f4f4"><b style="left:5px">20</b><b style="left:91px">Bio</b><b style="left:271px">5A, 5B</b></div>
<div class="row" style="top:397px;background:#fff"><b style="left:5px">21</b><b style="left:91px">Bio</b><b style="left:271px">5B, 5C</b></div>
<div class="row" style="top:422px;background:#f4f4f4"><b style="left:5px">22</b><b style="left:91px">Ch - Bio</b><b style="left:271px">Visos</b></div>
<div class="row" style="top:447px;background:#fff"><b style="left:5px">23</b><b style="left:91px">Mat</b><b style="left:271px">Visos</b></div>
<div class="row" style="top:472px;background:#f4f4f4"><b style="left:5px">24</b><b style="left:91px">Bio</b><b style="left:271px">5A</b></div>
<div class="row" style="top:497px;background:#fff"><b style="left:5px">25</b><b style="left:91px">Planavimo</b><b style="left:271px">Visi</b></div>
<div class="row" style="top:522px;background:#f4f4f4"><b style="left:5px">26</b><b style="left:91px">Mz</b><b style="left:271px">Grade</b></div>
<div class="row" style="top:547px;background:#fff"><b style="left:5px">27</b><b style="left:91px">Visos</b><b style="left:271px">Visos</b></div>
<div class="row" style="top:572px;background:#f4f4f4"><b style="left:5px">28</b><b style="left:91px">Visos</b><b style="left:271px">Visos</b></div>
<div class="row" style="top:597px;background:#fff"><b style="left:5px">29</b><b style="left:91px">Visos</b><b style="left:271px">Mokytojai</b></div>
<div class="row" style="top:622px;background:#f4f4f4"><b style="left:5px">30</b><b style="left:91px">Bio</b><b style="left:271px">Visos</b></div>
<div class="row" style="top:647px;background:#fff"><b style="left:5px">31</b><b style="left:91px">Mat</b><b style="left:271px">Visos</b></div>
<div class="row" style="top:672px;background:#c3fbc3"><b style="left:5px">32</b><b style="left:91px">Mat, Geom</b><b style="left:271px">Visi</b></div>
<svg class="a" style="left:115px;top:711px" width="34" height="34" viewBox="0 0 34 34"><circle cx="17" cy="17" r="16" fill="#3fb84a" stroke="#2a9a35" stroke-width="1"/><path d="M17 9.200v15.600M9.200 17h15.600" stroke="#fff" stroke-width="2.300" stroke-linecap="butt"/></svg>
<svg class="a" style="left:170px;top:708px" width="42" height="40" viewBox="170 708 42 40">
<g transform="translate(175 743.500) rotate(-43.500)">
<path d="M0 0L8.500-2.900V2.900z" fill="#f3d9b0" stroke="#b08a5a" stroke-width=".6"/>
<path d="M0 0L3.200-1.100V1.100z" fill="#3a3f4a"/>
<rect x="8.500" y="-2.900" width="25" height="5.800" fill="#f6c23c" stroke="#c89018" stroke-width=".7"/>
<rect x="33.500" y="-2.900" width="4" height="5.800" fill="#d3dfee" stroke="#9aa8bc" stroke-width=".6"/>
<path d="M37.500-2.900h2.600a2.900 2.900 0 0 1 0 5.800h-2.600z" fill="#f24a52" stroke="#c43a48" stroke-width=".6"/>
</g></svg>
<svg class="a" style="left:233px;top:711px" width="34" height="34" viewBox="0 0 34 34"><circle cx="17" cy="17" r="16" fill="#f44848" stroke="#8a1a1a" stroke-width="1"/><path d="M9.200 17h15.600" stroke="#fff" stroke-width="2.400" stroke-linecap="butt"/></svg>
<svg class="a" style="left:306px;top:710px" width="32" height="36" viewBox="0 0 32 36">
<path d="M17.800 2.100C19.500 3.500 21 4.500 22.600 5.500C25 7 27 10 28 14.200C28.500 18 27 22 25.500 24.800L25.100 28.600L29.400 29.600L30.200 34L7 34L8.200 29.600L13 29C15.500 25 17.500 21 16.400 19C17 17.500 17.500 16.500 17.300 15.300C15 16.200 12.500 16.300 10.600 15.300C9.300 14.800 8.400 14 8.600 13.200C10 11.500 11 10.500 11.500 9.300C12.500 8 14 6.500 14.900 5.500C16 4.500 17 3.300 17.800 2.100Z" fill="#55585f" stroke="#3a3d44" stroke-width=".7" stroke-linejoin="round"/>
<rect x="18" y="26.200" width="10" height="2.500" rx="1" fill="#f0a830"/>
<circle cx="12" cy="25.700" r="7.600" fill="#3fb84a" stroke="#2a9a35" stroke-width=".8"/>
<path d="M12 21.200v9M7.500 25.700h9" stroke="#fff" stroke-width="2.200"/>
</svg>
<svg class="a" style="left:378px;top:711px" width="34" height="34" viewBox="0 0 34 34"><circle cx="17" cy="17" r="16" fill="#c4c0d4" stroke="#a8a4c0" stroke-width="1"/><path d="M12.500 9.500v15l13-7.500z" fill="#f4f4fa"/></svg>
<div class="tl" style="left:82.5px;top:761px;width:100px;line-height:20px;margin-top:-2px;">Pridėti</div>
<div class="tl" style="left:141px;top:761px;width:100px;line-height:20px;margin-top:-2px;">Redaguoti</div>
<div class="tl" style="left:200.5px;top:761px;width:100px;line-height:20px;margin-top:-2px;">Pašalinti</div>
<div class="tl" style="left:272.5px;top:761px;width:100px;line-height:20px;margin-top:-2px;">Papildomai</div>
<div class="tl" style="left:345px;top:761px;width:100px;line-height:20px;margin-top:-2px;color:#a8a8a8;">Padaryti<br>aktyvią</div>
<div class="a" style="left:402px;top:139px;width:1005px;height:891px;background:#fff;border:1px solid #1883d7;box-shadow:0 0 16px rgba(0,0,0,.4)"></div>
<div class="t" style="left:406px;top:147px;font-size:15px;line-height:18px">Papildomai</div>
<svg class="a" style="left:1378px;top:148px" width="14" height="14" viewBox="0 0 14 14"><path d="M1 1l12 12M13 1L1 13" stroke="#000" stroke-width="1.050"/></svg>
<div class="gb" style="left:415px;top:193px;width:976px;height:123px"></div>
<div class="gl" style="left:422px;top:186px">Pamokų sąryšio tipas:</div>
<div class="gb" style="left:415px;top:325px;width:976px;height:101px"></div>
<div class="gl" style="left:422px;top:318px">Taikyti:</div>
<div class="gb" style="left:415px;top:433px;width:976px;height:437px"></div>
<div class="gl" style="left:422px;top:426px">Filtras</div>
<div class="gb" style="left:415px;top:886px;width:501px;height:94px"></div>
<div class="gl" style="left:422px;top:878px">Šio pamokų sąryšio svarba:</div>
<div class="gb" style="left:925px;top:886px;width:466px;height:94px"></div>
<div class="gl" style="left:932px;top:878px">Pastaba :</div>
<div class="cb" style="left:522px;top:219px;width:814px;height:24px;line-height:24px;">Maks. dienų per savaitę skaičius (#0)<svg class="a" style="right:4px;top:50%;margin-top:-3px" width="11" height="7" viewBox="0 0 11 7"><path d="M.500 .500l5 5 5-5" fill="none" stroke="#444" stroke-width="1"/></svg></div>
<div class="cb" style="left:522px;top:255px;width:86px;height:24px;line-height:24px;background:#fff;border-color:#0078d7"><span style="background:#0078d7;color:#fff;display:inline-block;line-height:16px;vertical-align:middle;margin-top:-4px;padding:0 0 0 1px;margin-left:2px">1</span><svg class="a" style="right:4px;top:50%;margin-top:-3px" width="11" height="7" viewBox="0 0 11 7"><path d="M.500 .500l5 5 5-5" fill="none" stroke="#444" stroke-width="1"/></svg></div>
<div class="t" style="left:625px;top:254px;font-size:13px;line-height:16px">Šis laukas leidžia pasirinkti maksimalų dienų skaičių,<br>kuomet pamokos turi vykti pažymėtose pozicijose.</div>
<div class="cb" style="left:522px;top:359px;width:368px;height:24px;line-height:24px;">Taikyti išrinktiems mokytojams<svg class="a" style="right:4px;top:50%;margin-top:-3px" width="11" height="7" viewBox="0 0 11 7"><path d="M.500 .500l5 5 5-5" fill="none" stroke="#444" stroke-width="1"/></svg></div>
<svg class="a" style="left:432.600px;top:219px" width="46" height="45" viewBox="0 0 46 45">
<g fill="#9cc7b8" stroke="#5f9f8e" stroke-width="1">
<rect x="1.500" y="14.500" width="9.500" height="9.500"/><rect x="1.500" y="24" width="9.500" height="9.500"/><rect x="11" y="24" width="9.500" height="9.500"/>
<rect x="1.500" y="33.500" width="9.500" height="9.500"/><rect x="11" y="33.500" width="9.500" height="9.500"/><rect x="20.500" y="33.500" width="9.500" height="9.500"/>
<rect x="35.300" y="1" width="8.700" height="8.700"/>
<rect x="18.700" y="4.800" width="8.200" height="8.200" transform="rotate(36 22.800 8.900)"/>
<rect x="34.600" y="18.800" width="8.200" height="8.200" transform="rotate(-17 38.700 22.900)"/>
</g></svg>
<svg class="a" style="left:431px;top:346px" width="48" height="46" viewBox="0 0 48 46">
<g fill="none" stroke="#6f8197" stroke-width="1.100">
<path d="M41.800 4.800H20.300a8 8 0 0 0-8 8V33a8 8 0 0 0 8 8H41.800"/><path d="M41.800 15.700H17.300a5 5 0 0 0-5 5V25.200a5 5 0 0 0 5 5H41.800"/></g>
<g fill="#8ab4ee" stroke="#4f80cf" stroke-width="1"><circle cx="7" cy="23" r="5.500"/><circle cx="41.800" cy="4.800" r="4.400"/><circle cx="41.800" cy="15.700" r="4.400"/><circle cx="41.800" cy="30.200" r="4.400"/><circle cx="41.800" cy="41" r="4.400"/></g>
</svg>
<svg class="a" style="left:430px;top:471px" width="50" height="32" viewBox="0 0 50 32">
<circle cx="15.500" cy="16" r="14" fill="#dde8f4" stroke="#93aacd" stroke-width="1"/><circle cx="34.500" cy="16" r="14" fill="#dde8f4" stroke="#93aacd" stroke-width="1"/>
<path d="M25 5.700a14 14 0 0 1 0 20.600a14 14 0 0 1 0-20.600z" fill="#8ab4ee" stroke="#5b8ad6" stroke-width="1"/>
</svg>
<div class="btn" style="left:523px;top:468px;width:147px;height:24px;line-height:24px;">Pakeisti: Mokytojai A</div>
<div class="btn" style="left:523px;top:504px;width:147px;height:24px;line-height:24px;">Pakeisti: Klasės A</div>
<div class="btn" style="left:523px;top:540px;width:147px;height:24px;line-height:24px;">Pakeisti: Disciplinos A</div>
<div class="t" style="left:683px;top:472px;line-height:15px">Visi mokytojai</div>
<div class="t" style="left:683px;top:506px;line-height:15px">Visos klasės</div>
<div class="t" style="left:683px;top:546px;line-height:15px">Mat, Geom</div>
<div class="a" style="left:693px;top:590px;width:37px;height:26px;background:#ffff00"></div>
<div class="a" style="left:527px;top:778px;width:46px;height:38px;background:#ffff00"></div>
<div class="a" style="left:574px;top:616px;width:352px;height:1px;background:#707070"></div>
<div class="a" style="left:574px;top:616px;width:1px;height:200px;background:#707070"></div>
<div class="a" style="left:613px;top:589px;width:0;height:227px;border-left:1px dashed #777"></div>
<div class="a" style="left:652px;top:589px;width:0;height:227px;border-left:1px dashed #777"></div>
<div class="a" style="left:691px;top:589px;width:0;height:227px;border-left:1px dashed #777"></div>
<div class="a" style="left:730px;top:589px;width:0;height:227px;border-left:1px dashed #777"></div>
<div class="a" style="left:769px;top:589px;width:0;height:227px;border-left:1px dashed #777"></div>
<div class="a" style="left:808px;top:589px;width:0;height:227px;border-left:1px dashed #777"></div>
<div class="a" style="left:847px;top:589px;width:0;height:227px;border-left:1px dashed #777"></div>
<div class="a" style="left:886px;top:589px;width:0;height:227px;border-left:1px dashed #777"></div>
<div class="a" style="left:527px;top:656px;width:399px;height:0;border-top:1px dashed #777"></div>
<div class="a" style="left:527px;top:696px;width:399px;height:0;border-top:1px dashed #777"></div>
<div class="a" style="left:527px;top:736px;width:399px;height:0;border-top:1px dashed #777"></div>
<div class="a" style="left:527px;top:776px;width:399px;height:0;border-top:1px dashed #777"></div>
<div class="c" style="left:574px;top:596px;width:39px;font-size:11px;line-height:13px">1</div>
<div class="c" style="left:613px;top:596px;width:39px;font-size:11px;line-height:13px">2</div>
<div class="c" style="left:652px;top:596px;width:39px;font-size:11px;line-height:13px">3</div>
<div class="c" style="left:691px;top:596px;width:39px;font-size:11px;line-height:13px">4</div>
<div class="c" style="left:730px;top:596px;width:39px;font-size:11px;line-height:13px">5</div>
<div class="c" style="left:769px;top:596px;width:39px;font-size:11px;line-height:13px">6</div>
<div class="c" style="left:808px;top:596px;width:39px;font-size:11px;line-height:13px">7</div>
<div class="c" style="left:847px;top:596px;width:39px;font-size:11px;line-height:13px">8</div>
<div class="c" style="left:886px;top:596px;width:39px;font-size:11px;line-height:13px">9</div>
<div class="t" style="left:536px;top:629px;font-size:10px;line-height:12px">Pi</div>
<div class="t" style="left:536px;top:669px;font-size:10px;line-height:12px">An</div>
<div class="t" style="left:536px;top:709px;font-size:10px;line-height:12px">Tr</div>
<div class="t" style="left:536px;top:749px;font-size:10px;line-height:12px">Ke</div>
<div class="t" style="left:536px;top:789px;font-size:10px;line-height:12px">Pe</div>
<svg class="a" style="left:574px;top:616px" width="352" height="200" viewBox="0 0 352 200"><g fill="#36aa22" stroke="#2a9a1a" stroke-width=".4"><path transform="translate(19.5 20)" d="M-11.300 1L-8.600-1.800-3.800 3.200 9-8.600 11.600-6-3.800 8.800z"/><path transform="translate(58.5 20)" d="M-11.300 1L-8.600-1.800-3.800 3.200 9-8.600 11.600-6-3.800 8.800z"/><path transform="translate(97.5 20)" d="M-11.300 1L-8.600-1.800-3.800 3.200 9-8.600 11.600-6-3.800 8.800z"/><path transform="translate(136.5 20)" d="M-11.300 1L-8.600-1.800-3.800 3.200 9-8.600 11.600-6-3.800 8.800z"/><path transform="translate(175.5 20)" d="M-11.300 1L-8.600-1.800-3.800 3.200 9-8.600 11.600-6-3.800 8.800z"/><path transform="translate(214.5 20)" d="M-11.300 1L-8.600-1.800-3.800 3.200 9-8.600 11.600-6-3.800 8.800z"/><path transform="translate(253.5 20)" d="M-11.300 1L-8.600-1.800-3.800 3.200 9-8.600 11.600-6-3.800 8.800z"/><path transform="translate(292.5 20)" d="M-11.300 1L-8.600-1.800-3.800 3.200 9-8.600 11.600-6-3.800 8.800z"/><path transform="translate(331.5 20)" d="M-11.300 1L-8.600-1.800-3.800 3.200 9-8.600 11.600-6-3.800 8.800z"/><path transform="translate(19.5 60)" d="M-11.300 1L-8.600-1.800-3.800 3.200 9-8.600 11.600-6-3.800 8.800z"/><path transform="translate(58.5 60)" d="M-11.300 1L-8.600-1.800-3.800 3.200 9-8.600 11.600-6-3.800 8.800z"/><path transform="translate(97.5 60)" d="M-11.300 1L-8.600-1.800-3.800 3.200 9-8.600 11.600-6-3.800 8.800z"/><path transform="translate(136.5 60)" d="M-11.300 1L-8.600-1.800-3.800 3.200 9-8.600 11.600-6-3.800 8.800z"/><path transform="translate(175.5 60)" d="M-11.300 1L-8.600-1.800-3.800 3.200 9-8.600 11.600-6-3.800 8.800z"/><path transform="translate(214.5 60)" d="M-11.300 1L-8.600-1.800-3.800 3.200 9-8.600 11.600-6-3.800 8.800z"/><path transform="translate(253.5 60)" d="M-11.300 1L-8.600-1.800-3.800 3.200 9-8.600 11.600-6-3.800 8.800z"/><path transform="translate(292.5 60)" d="M-11.300 1L-8.600-1.800-3.800 3.200 9-8.600 11.600-6-3.800 8.800z"/><path transform="translate(331.5 60)" d="M-11.300 1L-8.600-1.800-3.800 3.200 9-8.600 11.600-6-3.800 8.800z"/><path transform="translate(19.5 100)" d="M-11.300 1L-8.600-1.800-3.800 3.200 9-8.600 11.600-6-3.800 8.800z"/><path transform="translate(58.5 100)" d="M-11.300 1L-8.600-1.800-3.800 3.200 9-8.600 11.600-6-3.800 8.800z"/><path transform="translate(97.5 100)" d="M-11.300 1L-8.600-1.800-3.800 3.200 9-8.600 11.600-6-3.800 8.800z"/><path transform="translate(136.5 100)" d="M-11.300 1L-8.600-1.800-3.800 3.200 9-8.600 11.600-6-3.800 8.800z"/><path transform="translate(175.5 100)" d="M-11.300 1L-8.600-1.800-3.800 3.200 9-8.600 11.600-6-3.800 8.800z"/><path transform="translate(214.5 100)" d="M-11.300 1L-8.600-1.800-3.800 3.200 9-8.600 11.600-6-3.800 8.800z"/><path transform="translate(253.5 100)" d="M-11.300 1L-8.600-1.800-3.800 3.200 9-8.600 11.600-6-3.800 8.800z"/><path transform="translate(292.5 100)" d="M-11.300 1L-8.600-1.800-3.800 3.200 9-8.600 11.600-6-3.800 8.800z"/><path transform="translate(331.5 100)" d="M-11.300 1L-8.600-1.800-3.800 3.200 9-8.600 11.600-6-3.800 8.800z"/><path transform="translate(19.5 140)" d="M-11.300 1L-8.600-1.800-3.800 3.200 9-8.600 11.600-6-3.800 8.800z"/><path transform="translate(58.5 140)" d="M-11.300 1L-8.600-1.800-3.800 3.200 9-8.600 11.600-6-3.800 8.800z"/><path transform="translate(97.5 140)" d="M-11.300 1L-8.600-1.800-3.800 3.200 9-8.600 11.600-6-3.800 8.800z"/><path transform="translate(136.5 140)" d="M-11.300 1L-8.600-1.800-3.800 3.200 9-8.600 11.600-6-3.800 8.800z"/><path transform="translate(175.5 140)" d="M-11.300 1L-8.600-1.800-3.800 3.200 9-8.600 11.600-6-3.800 8.800z"/><path transform="translate(214.5 140)" d="M-11.300 1L-8.600-1.800-3.800 3.200 9-8.600 11.600-6-3.800 8.800z"/><path transform="translate(253.5 140)" d="M-11.300 1L-8.600-1.800-3.800 3.200 9-8.600 11.600-6-3.800 8.800z"/><path transform="translate(292.5 140)" d="M-11.300 1L-8.600-1.800-3.800 3.200 9-8.600 11.600-6-3.800 8.800z"/><path transform="translate(331.5 140)" d="M-11.300 1L-8.600-1.800-3.800 3.200 9-8.600 11.600-6-3.800 8.800z"/><path transform="translate(19.5 180)" d="M-11.300 1L-8.600-1.800-3.800 3.200 9-8.600 11.600-6-3.800 8.800z"/><path transform="translate(58.5 180)" d="M-11.300 1L-8.600-1.800-3.800 3.200 9-8.600 11.600-6-3.800 8.800z"/><path transform="translate(97.5 180)" d="M-11.300 1L-8.600-1.800-3.800 3.200 9-8.600 11.600-6-3.800 8.800z"/><path transform="translate(136.5 180)" d="M-11.300 1L-8.600-1.800-3.800 3.200 9-8.600 11.600-6-3.800 8.800z"/><path transform="translate(175.5 180)" d="M-11.300 1L-8.600-1.800-3.800 3.200 9-8.600 11.600-6-3.800 8.800z"/><path transform="translate(214.5 180)" d="M-11.300 1L-8.600-1.800-3.800 3.200 9-8.600 11.600-6-3.800 8.800z"/><path transform="translate(253.5 180)" d="M-11.300 1L-8.600-1.800-3.800 3.200 9-8.600 11.600-6-3.800 8.800z"/><path transform="translate(292.5 180)" d="M-11.300 1L-8.600-1.800-3.800 3.200 9-8.600 11.600-6-3.800 8.800z"/><path transform="translate(331.5 180)" d="M-11.300 1L-8.600-1.800-3.800 3.200 9-8.600 11.600-6-3.800 8.800z"/></g></svg>
<div class="btn" style="left:523px;top:826px;width:147px;height:24px;line-height:24px;">Pasirinkimai A</div>
<svg class="a" style="left:432px;top:904px" width="46" height="46" viewBox="0 0 46 46"><circle cx="23" cy="23" r="21.500" fill="#8ab4ee" stroke="#5b8ad6" stroke-width="1"/><path d="M16.500 12.500v21l18-10.500z" fill="#fff"/></svg>
<div class="cb" style="left:522px;top:913px;width:203px;height:24px;line-height:24px;">Normali<svg class="a" style="right:4px;top:50%;margin-top:-3px" width="11" height="7" viewBox="0 0 11 7"><path d="M.500 .500l5 5 5-5" fill="none" stroke="#444" stroke-width="1"/></svg></div>
<div class="btn" style="left:523px;top:946px;width:133px;height:24px;line-height:24px;">Paversti neaktyvia</div>
<div class="a" style="left:939px;top:927px;width:425px;height:24px;background:#fff;border:1px solid #7a7a7a"></div>
<div class="btn" style="left:822px;top:994px;width:86px;height:26px;line-height:26px;border:2px solid #0078d7;line-height:22px">OK</div>
<div class="btn" style="left:924px;top:994px;width:86px;height:26px;line-height:26px;">Atšaukti</div>
<svg class="a" style="left:0;top:0;pointer-events:none" width="1408" height="1035" viewBox="0 0 1408 1035">
<g fill="none" stroke="#e81e2e" stroke-width="3.500" stroke-linejoin="round" stroke-linecap="round">
<rect x="187.500" y="34" width="90.800" height="29.500" rx="3"/>
<rect x="474" y="58" width="60" height="77.500" rx="4"/>
<rect x="279.500" y="704.300" width="83" height="90.700" rx="3"/>
</g>
<g fill="none" stroke="#ff0000" stroke-width="3.200" stroke-linecap="round" stroke-linejoin="round">
<path d="M451.0 126.8C442.3 129.0 413.7 135.1 399.0 140.0C384.3 144.9 374.2 149.4 362.9 156.4C351.6 163.4 340.0 171.3 331.4 182.0C322.8 192.7 317.1 206.3 311.0 220.8C304.9 235.3 299.4 252.9 295.0 269.0C290.6 285.1 286.7 303.9 284.3 317.4C281.9 330.9 281.7 334.1 280.7 350.0C279.7 365.9 278.6 390.0 278.3 412.5C278.0 435.0 278.3 460.9 279.0 485.0C279.7 509.1 281.4 539.9 282.7 557.4C284.0 574.9 285.5 579.6 286.8 590.0C288.1 600.4 287.6 603.7 290.4 620.0C293.2 636.3 301.5 676.7 303.7 688.0"/>
<path d="M293.300 674.700L303.700 688 307.800 671.600"/>
<path d="M332.700 683.700L422.500 568.500"/>
<path d="M405.800 575.700L422.500 568.500 417 584"/>
</g></svg>
</body></html>
